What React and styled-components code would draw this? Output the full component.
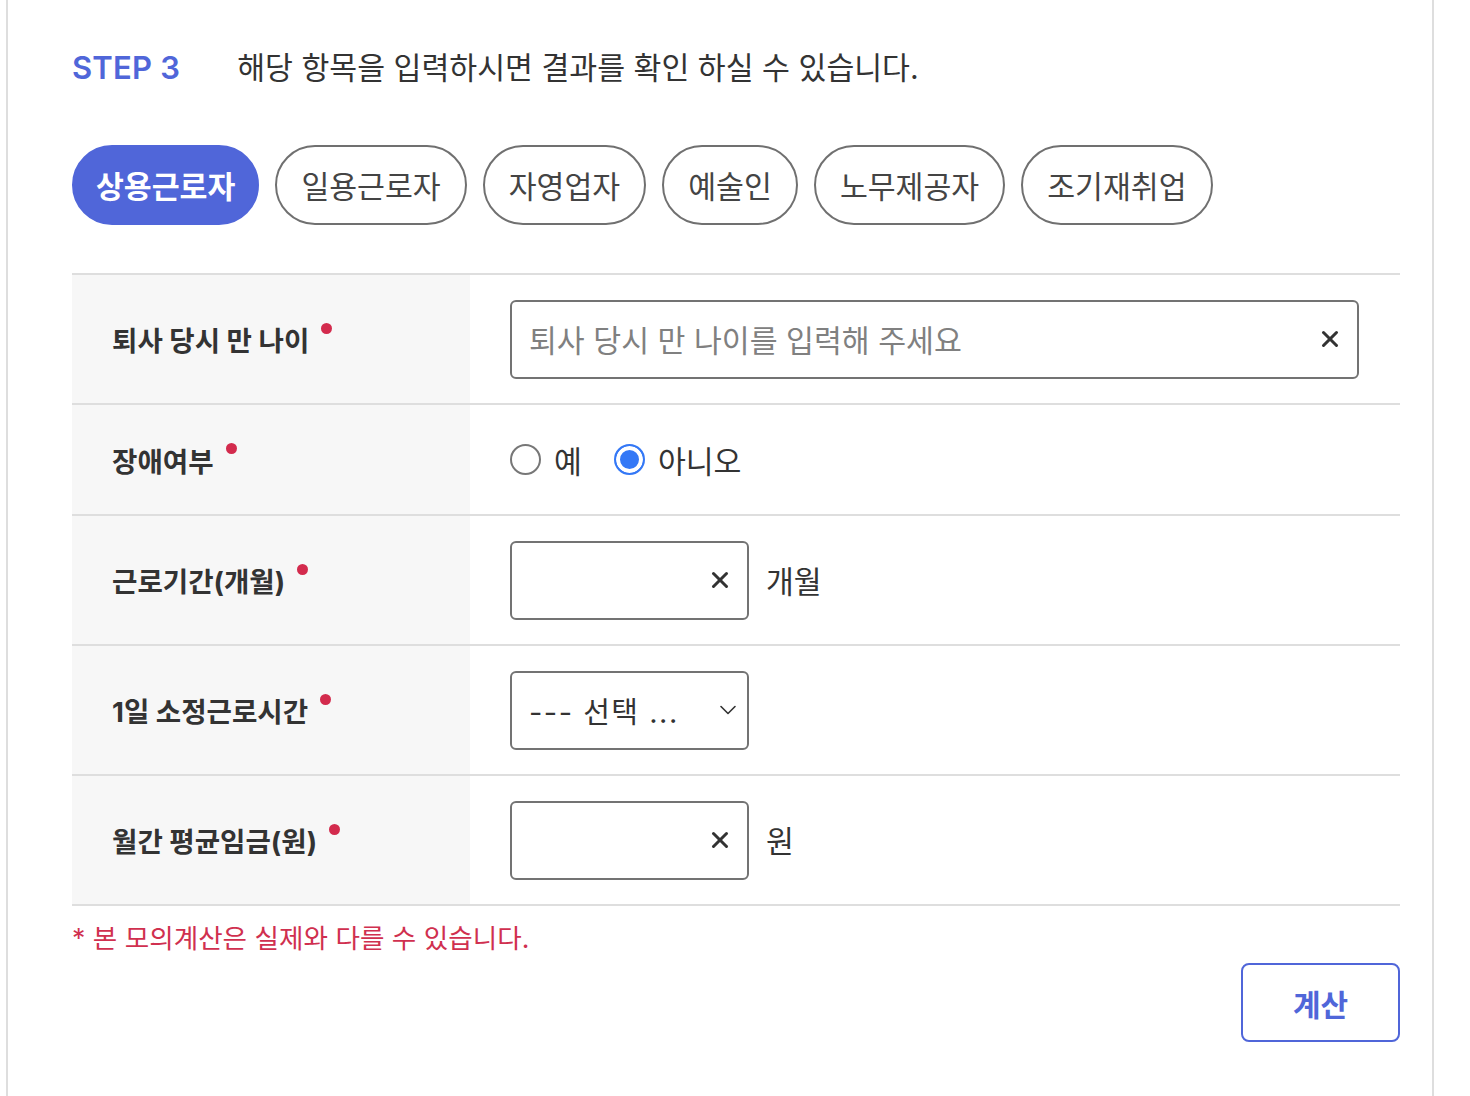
import React, { useState } from 'react';
import styled, { createGlobalStyle } from 'styled-components';
import { X, ChevronDown } from 'lucide-react';

const Global = createGlobalStyle`
  body {
    margin: 0;
    background: #fff;
    font-family: Inter, "Noto Sans CJK KR", sans-serif;
    color: #333;
  }
`;

const tabs = ['상용근로자', '일용근로자', '자영업자', '예술인', '노무제공자', '조기재취업'];

const App = () => {
  const [active, setActive] = useState(0);
  const [disabled, setDisabled] = useState(false);

  return (
    <>
      <Global />
      <Panel>
        <Header>
          <Step>STEP 3</Step>
          <Guide>해당 항목을 입력하시면 결과를 확인 하실 수 있습니다.</Guide>
        </Header>

        <Tabs>
          {tabs.map((t, i) => (
            <Tab key={t} $active={i === active} onClick={() => setActive(i)}>
              {t}
            </Tab>
          ))}
        </Tabs>

        <Table>
          <Row $h={130}>
            <Label>퇴사 당시 만 나이<Dot /></Label>
            <Cell>
              <Field $w={849}>
                <Placeholder>퇴사 당시 만 나이를 입력해 주세요</Placeholder>
                <X size={26} strokeWidth={2.8} color="#333" />
              </Field>
            </Cell>
          </Row>
          <Row $h={111}>
            <Label>장애여부<Dot /></Label>
            <Cell>
              <RadioGroup>
                <RadioItem onClick={() => setDisabled(true)}>
                  <Circle $on={disabled} />예
                </RadioItem>
                <RadioItem onClick={() => setDisabled(false)}>
                  <Circle $on={!disabled} />아니오
                </RadioItem>
              </RadioGroup>
            </Cell>
          </Row>
          <Row $h={130}>
            <Label>근로기간(개월)<Dot /></Label>
            <Cell>
              <Field $w={239}>
                <span />
                <X size={26} strokeWidth={2.8} color="#333" />
              </Field>
              <Unit>개월</Unit>
            </Cell>
          </Row>
          <Row $h={130}>
            <Label>1일 소정근로시간<Dot /></Label>
            <Cell>
              <Field $w={239}>
                <SelectText>--- 선택 ...</SelectText>
                <Chevron>
                  <ChevronDown size={28} strokeWidth={1.4} color="#333" />
                </Chevron>
              </Field>
            </Cell>
          </Row>
          <Row $h={130}>
            <Label>월간 평균임금(원)<Dot /></Label>
            <Cell>
              <Field $w={239}>
                <span />
                <X size={26} strokeWidth={2.8} color="#333" />
              </Field>
              <Unit>원</Unit>
            </Cell>
          </Row>
        </Table>

        <Notice>* 본 모의계산은 실제와 다를 수 있습니다.</Notice>
        <Actions>
          <CalcButton>계산</CalcButton>
        </Actions>
      </Panel>
    </>
  );
};

export default App;

/* ---------- layout ---------- */

const Panel = styled.div`
  margin-left: 6px;
  width: 1428px;
  min-height: 1096px;
  box-sizing: border-box;
  border-left: 2px solid #dedede;
  border-right: 2px solid #dedede;
  padding: 47px 32px 0 64px;
`;

const Header = styled.div`
  display: flex;
  align-items: center;
  gap: 57px;
  line-height: 42px;
`;

const Step = styled.span`
  font-size: 31px;
  font-weight: 600;
  color: #5066d9;
  letter-spacing: 0.2px;
`;

const Guide = styled.span`
  font-size: 30.3px;
  color: #333;
`;

const Tabs = styled.div`
  display: flex;
  gap: 16px;
  margin-top: 56px;
`;

const Tab = styled.button`
  height: 80px;
  box-sizing: border-box;
  padding: 0 ${p => (p.$active ? 22 : 24)}px;
  border-radius: 40px;
  font-family: inherit;
  font-size: 30.3px;
  cursor: pointer;
  border: 2px solid ${p => (p.$active ? '#5066d9' : '#707070')};
  background: ${p => (p.$active ? '#5066d9' : '#fff')};
  color: ${p => (p.$active ? '#fff' : '#444')};
  font-weight: ${p => (p.$active ? 600 : 400)};
`;

const Table = styled.div`
  margin-top: 48px;
  border-top: 2px solid #dedede;
`;

const Row = styled.div`
  display: grid;
  grid-template-columns: 398px 1fr;
  height: ${p => p.$h}px;
  box-sizing: border-box;
  border-bottom: 2px solid #dedede;
`;

const Label = styled.div`
  background: #f7f7f7;
  display: flex;
  align-items: center;
  padding-left: 40px;
  font-size: 27.6px;
  font-weight: 700;
  color: #333;
`;

const Dot = styled.span`
  display: inline-block;
  width: 11px;
  height: 11px;
  border-radius: 50%;
  background: #d32b4d;
  margin-left: 12px;
  transform: translateY(-11px);
`;

const Cell = styled.div`
  display: flex;
  align-items: center;
  padding-left: 40px;
  gap: 17px;
`;

const Field = styled.div`
  width: ${p => p.$w}px;
  height: 79px;
  box-sizing: border-box;
  border: 2px solid #737373;
  border-radius: 6px;
  display: flex;
  align-items: center;
  justify-content: space-between;
  padding: 0 14px 0 17px;
`;

const Chevron = styled.span`
  display: flex;
  margin-right: -9px;
`;

const Placeholder = styled.span`
  font-size: 30.3px;
  color: #808080;
`;

const SelectText = styled.span`
  font-size: 29px;
  color: #333;
  letter-spacing: 1.5px;
`;

const Unit = styled.span`
  font-size: 30.3px;
  color: #333;
`;

const RadioGroup = styled.div`
  display: flex;
  gap: 32px;
`;

const RadioItem = styled.label`
  display: flex;
  align-items: center;
  gap: 13px;
  font-size: 30.3px;
  color: #333;
  cursor: pointer;
`;

const Circle = styled.span`
  width: 31px;
  height: 31px;
  box-sizing: border-box;
  border-radius: 50%;
  border: 2px solid ${p => (p.$on ? '#3478f6' : '#777')};
  background: ${p => (p.$on ? '#3478f6' : '#fff')};
  box-shadow: ${p => (p.$on ? 'inset 0 0 0 4px #fff' : 'none')};
`;

const Notice = styled.p`
  margin: 14px 0 0;
  font-size: 26.6px;
  line-height: 36px;
  color: #d0304f;
`;

const Actions = styled.div`
  display: flex;
  justify-content: flex-end;
  margin-top: 7px;
`;

const CalcButton = styled.button`
  width: 159px;
  height: 79px;
  border: 2px solid #5066d9;
  border-radius: 8px;
  background: #fff;
  color: #5066d9;
  font-family: inherit;
  font-size: 30px;
  font-weight: 700;
  cursor: pointer;
`;
